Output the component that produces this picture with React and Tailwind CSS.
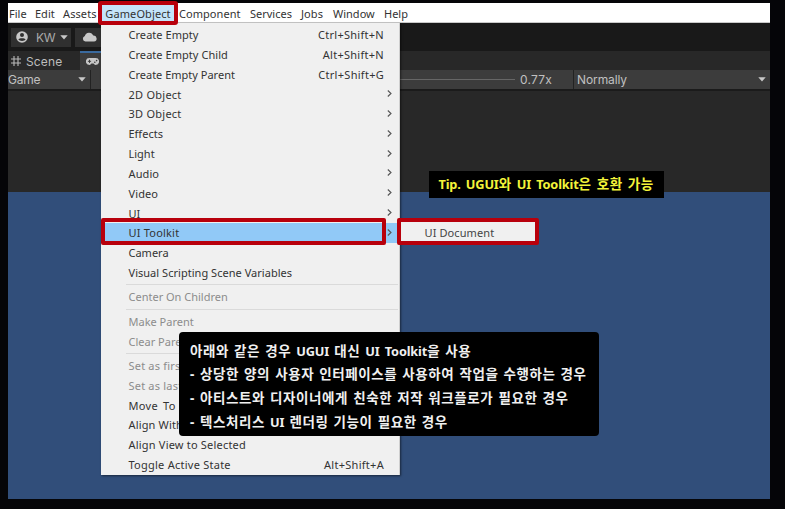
import React from "react";

const MENU_ITEMS = [
  { label: "Create Empty", keys: "Ctrl+Shift+N", spacing: "tracking-[0.05px]" },
  { label: "Create Empty Child", keys: "Alt+Shift+N", spacing: "tracking-[0.05px]" },
  { label: "Create Empty Parent", keys: "Ctrl+Shift+G" },
  { label: "2D Object", sub: true, spacing: "tracking-[0.25px]" },
  { label: "3D Object", sub: true, spacing: "tracking-[0.25px]" },
  { label: "Effects", sub: true },
  { label: "Light", sub: true },
  { label: "Audio", sub: true, spacing: "tracking-[0.1px]" },
  { label: "Video", sub: true, spacing: "tracking-[0.1px]" },
  { label: "UI", sub: true },
  { label: "UI Toolkit", sub: true, active: true, spacing: "tracking-[0.2px]" },
  { label: "Camera" },
  { label: "Visual Scripting Scene Variables", spacing: "tracking-[0.03px]" },
  { divider: true },
  { label: "Center On Children", disabled: true },
  { divider: true },
  { label: "Make Parent", disabled: true },
  { label: "Clear Parent", disabled: true },
  { divider: true },
  { label: "Set as first sibling", disabled: true, spacing: "tracking-[0.2px]" },
  { label: "Set as last sibling", disabled: true, spacing: "tracking-[0.2px]" },
  { label: "Move To View", spacing: "tracking-[0.3px] [word-spacing:2px]" },
  { label: "Align With View", spacing: "tracking-[0.15px]" },
  { label: "Align View to Selected", spacing: "tracking-[0.2px]" },
  { label: "Toggle Active State", keys: "Alt+Shift+A", spacing: "tracking-[0.25px]" },
];

const NOTES = [
  "아래와 같은 경우 UGUI 대신 UI Toolkit을 사용",
  "- 상당한 양의 사용자 인터페이스를 사용하여 작업을 수행하는 경우",
  "- 아티스트와 디자이너에게 친숙한 저작 워크플로가 필요한 경우",
  "- 텍스처리스 UI 렌더링 기능이 필요한 경우",
];

// Korean glyphs are set slightly larger and looser than the Latin words between them.
function MixedText({ text }) {
  return (
    <span className="whitespace-pre text-[13.5px] tracking-[0.58px] [word-spacing:1px]">
      {text.split(/([A-Za-z.]+)/).map((part, i) =>
        /^[A-Za-z.]+$/.test(part) ? (
          <span key={i} className="text-[12.75px] tracking-[-0.15px]">
            {part}
          </span>
        ) : (
          part
        )
      )}
    </span>
  );
}

function Caret() {
  return (
    <svg className="h-[5px] w-2 shrink-0" viewBox="0 0 8 5">
      <path d="M0.3 0.3H7.7L4 4.6Z" fill="#c8c8c8" />
    </svg>
  );
}

function MenuRow({ item }) {
  if (item.divider) {
    return (
      <div className="flex h-[4.5px] items-center pl-[25px] pr-px">
        <div className="h-px w-full bg-[#dadada]" />
      </div>
    );
  }
  return (
    <div
      className={`flex h-[19.83px] items-center pl-[27.5px] ${item.active ? "bg-[#91c9f7]" : ""} ${
        item.disabled ? "text-[#8c8c8c]" : "text-[#333]"
      }`}
    >
      <span className={`flex-1 ${item.spacing || ""}`}>{item.label}</span>
      {item.keys && <span className="pr-[15px] tracking-[0.28px]">{item.keys}</span>}
      {item.sub && (
        <svg className="mr-[7px] -mt-px h-[7px] w-[5px]" viewBox="0 0 5 7" fill="none">
          <path d="M0.8 0.5L4 3.5L0.8 6.5" stroke="#555" strokeWidth="1.1" />
        </svg>
      )}
    </div>
  );
}

function MenuBar() {
  return (
    <div className="flex h-5 items-center border-b border-[#c9c9c9] bg-white pt-0.5 font-['Noto_Sans',sans-serif] text-[11px] text-[#333]">
      <span className="w-[27px] pl-px">File</span>
      <span className="w-7">Edit</span>
      <span className="w-[42px] tracking-[0.1px]">Assets</span>
      <span className="w-[74px]">GameObject</span>
      <span className="w-[71px] tracking-[0.05px]">Component</span>
      <span className="w-[51px]">Services</span>
      <span className="w-8 tracking-[0.1px]">Jobs</span>
      <span className="w-[51px]">Window</span>
      <span>Help</span>
    </div>
  );
}

function AccountBar() {
  return (
    <div className="flex h-7 items-center gap-1 bg-[#191919] pl-[3px]">
      <div className="flex h-[19px] w-[60px] items-center bg-[#303030] pl-[5px]">
        <svg className="h-3 w-3" viewBox="0 0 12 12">
          <circle cx="6" cy="6" r="5.8" fill="#c8c8c8" />
          <circle cx="6" cy="4.1" r="2" fill="#303030" />
          <path d="M2.4 8.6C3.2 6.7 8.8 6.7 9.6 8.6C8.6 10.5 3.4 10.5 2.4 8.6Z" fill="#303030" />
        </svg>
        <span className="ml-2 w-6 pt-px text-xs tracking-[-0.3px] text-[#aaa]">KW</span>
        <Caret />
      </div>
      <div className="flex h-[19px] w-10 items-center bg-[#303030] pl-[7px]">
        <svg className="h-[10px] w-[15px]" viewBox="0 0 15 10">
          <path d="M3.4 9.6A2.9 2.9 0 0 1 2.8 4A4.4 4.4 0 0 1 11.2 3.6A3 3 0 0 1 12 9.6Z" fill="#c8c8c8" />
        </svg>
      </div>
    </div>
  );
}

function TabBar() {
  return (
    <div className="flex h-[19px] bg-[#282828]">
      <div className="flex w-[72px] items-center gap-[5px] pl-[3px]">
        <svg className="h-[10px] w-[10px]" viewBox="0 0 10 10" stroke="#b8b8b8" strokeWidth="1.1">
          <path d="M3 0V10M7 0V10M0 3H10M0 7H10" />
        </svg>
        <span className="pt-[2px] text-xs tracking-[0.15px] text-[#bdbdbd]">Scene</span>
      </div>
      <div className="flex w-20 items-center border-t-2 border-[#3a6a9e] bg-[#3c3c3c] pl-[6px]">
        <svg className="h-[7px] w-[13px]" viewBox="0 0 13 7">
          <path
            d="M3.4 0H9.6A3.5 3.5 0 0 1 9.6 7C8.4 7 7.9 5.7 7.4 5.5H5.6C5.1 5.7 4.6 7 3.4 7A3.5 3.5 0 0 1 3.4 0Z"
            fill="#c8c8c8"
          />
          <path d="M3.5 1.7V4.9M1.9 3.3H5.1" stroke="#3c3c3c" />
          <circle cx="8.8" cy="4.2" r="0.8" fill="#3c3c3c" />
          <circle cx="10.6" cy="2.6" r="0.8" fill="#3c3c3c" />
        </svg>
      </div>
    </div>
  );
}

function GameToolbar() {
  return (
    <div className="flex h-[19px] bg-[#3c3c3c] text-xs text-[#c0c0c0]">
      <div className="flex w-[83px] items-center justify-between border-r border-[#222] pr-1">
        <span className="tracking-[-0.2px]">Game</span>
        <Caret />
      </div>
      <div className="flex w-[483px] items-center border-r border-[#222] pr-[21px]">
        <div className="ml-5 h-px flex-1 bg-[#666]" />
        <span className="ml-[5px] tracking-[0.2px]">0.77x</span>
      </div>
      <div className="flex flex-1 items-center justify-between pl-[3px] pr-1">
        <span className="tracking-[-0.1px]">Normally</span>
        <Caret />
      </div>
    </div>
  );
}

export default function App() {
  return (
    <div className="relative h-[509px] w-[785px] overflow-hidden bg-[#050508] pl-2 pt-[3px] leading-none">
      <div className="flex h-[496px] w-[762px] flex-col font-[Inter,Roboto,sans-serif]">
        <MenuBar />
        <AccountBar />
        <TabBar />
        <GameToolbar />
        <div className="h-[103px] border-t-2 border-[#1b1b1b] bg-[#282828]" />
        <div className="flex-1 bg-[#314e7a]" />
      </div>

      <div className="absolute left-[101px] top-[23px] h-[452px] w-[299px] border-r border-[#cfcfcf] bg-[#f0f0f0] pt-[1.7px] font-['Noto_Sans',sans-serif] text-[11px] shadow-[1px_1px_2px_rgba(0,0,0,0.5)]">
        {MENU_ITEMS.map((item, i) => (
          <MenuRow key={i} item={item} />
        ))}
      </div>

      <div className="absolute left-[98px] top-[1px] flex h-6 w-20 items-center justify-center rounded-[3px] border-4 border-[#b8000c] bg-[#c4e4fa] pt-px font-['Noto_Sans',sans-serif] text-[11px] tracking-[0.1px] text-[#333]">
        GameObject
      </div>
      <div className="absolute left-[101px] top-[218px] h-[27px] w-[285px] rounded-[2px] border-4 border-[#b8000c]" />
      <div className="absolute left-[397px] top-[218px] flex h-[27px] w-[142px] items-center rounded-[2px] border-4 border-[#b8000c] bg-[#f0f0f0] pl-[23.5px] pt-0.5 font-['Noto_Sans',sans-serif] text-[11px] tracking-[0.1px] text-[#444]">
        UI Document
      </div>

      <div className="absolute left-[429px] top-[171px] flex h-[27px] w-[235px] items-center bg-black pl-[9.5px] pt-px font-['Noto_Sans','Noto_Sans_CJK_KR',sans-serif] font-bold text-[#f4f43a]">
        <MixedText text="Tip. UGUI와 UI Toolkit은 호환 가능" />
      </div>

      <div className="absolute left-[179px] top-[332px] h-[104px] w-[420px] rounded-[4px] bg-black pl-[11px] pt-[7.5px] font-['Noto_Sans','Noto_Sans_CJK_KR',sans-serif] font-bold text-[#f0f0f0]">
        {NOTES.map((line) => (
          <div key={line} className="flex h-[23.7px] items-center">
            <MixedText text={line} />
          </div>
        ))}
      </div>
    </div>
  );
}
